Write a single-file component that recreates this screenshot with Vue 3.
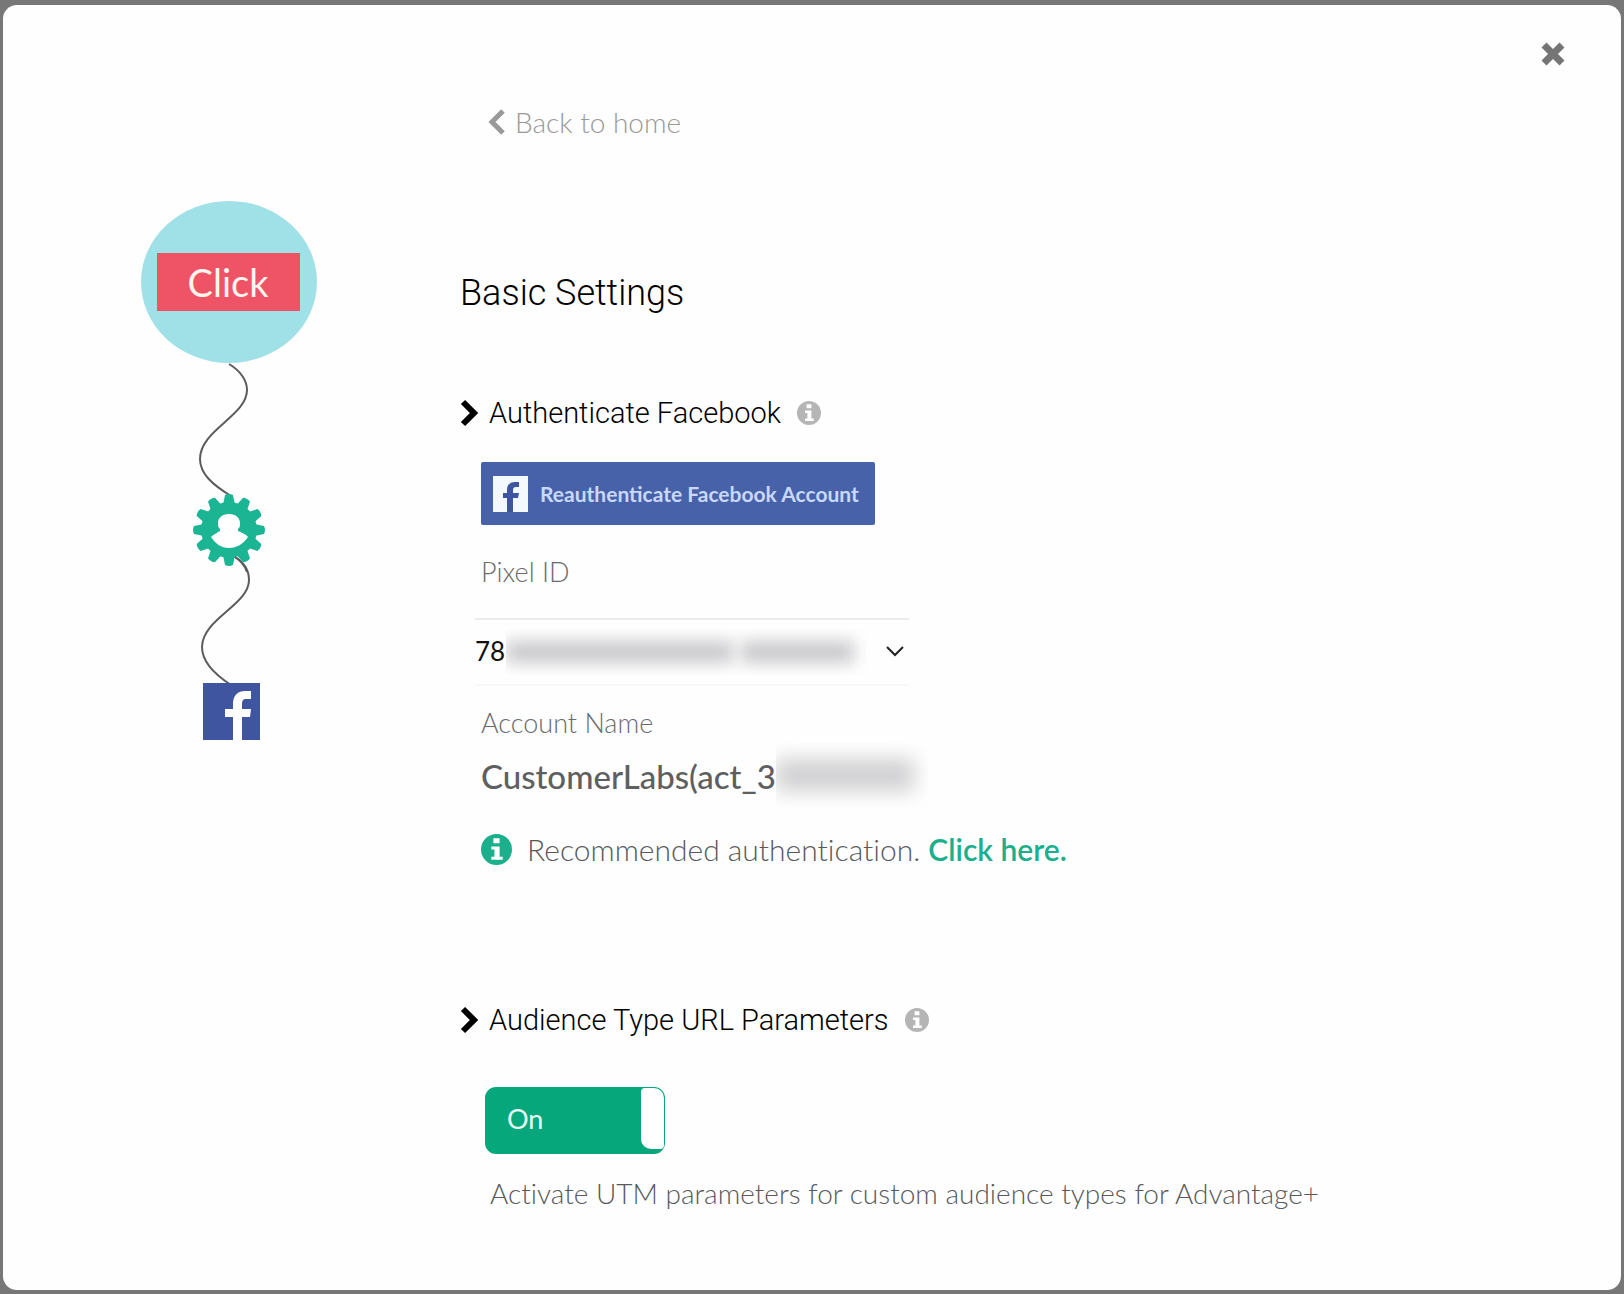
<script setup>
import { ref } from 'vue'

const pixel = ref('78')
const urlParameters = ref(true)
const teeth = Array.from({ length: 12 }, (_, i) => i * 30)
</script>

<template>
  <div class="page">
    <section class="dialog" role="dialog" aria-labelledby="settings-title">
      <button class="close" type="button" aria-label="Close">
        <svg width="24" height="24" viewBox="0 0 24 24">
          <path d="M3 3 21 21M21 3 3 21" stroke="#757575" stroke-width="7" />
        </svg>
      </button>

      <aside class="flow">
        <svg class="flow-art" width="180" height="544" viewBox="0 0 180 544" role="img" aria-label="Click to Facebook flow">
          <ellipse cx="90" cy="83" rx="88" ry="81" fill="#a0e1e7" />
          <rect x="18" y="54" width="143" height="58" fill="#ef5466" />
          <text x="89" y="98" text-anchor="middle" class="flow-text">Click</text>
          <g fill="none" stroke="#5c5c5e" stroke-width="2">
            <path d="M90 165C102 172 108 182 108 191C108 217 61 231 61 260C61 275 74 286 92 297" />
            <path d="M96 358C106 364 110 373 110 381C110 406 63 420 63 448C63 463 75 475 92 486" />
          </g>
          <g transform="translate(90 331)">
            <g fill="#1bb593">
              <circle r="28" />
              <path v-for="angle in teeth" :key="angle" d="M-6-25-4-35Q0-37 4-35L6-25Z" :transform="`rotate(${angle})`" />
            </g>
            <path fill="#fff" d="M0-16C7-16 11-12 11-7C11-4 11-3 9-1L9 1C13 3 17 4 19 7C14 14 8 18 0 18C-8 18-13 14-18 7C-15 4-12 3-9 1L-9-1C-11-3-11-4-11-7C-11-12-7-16 0-16Z" />
          </g>
          <path d="M96 358C102 362 106 367 108 373" fill="none" stroke="#5c5c5e" stroke-width="2" />
          <rect x="64" y="484" width="57" height="57" fill="#3f559f" />
          <path fill="#fff" d="M94 541V518H86V510H94V505C94 496 99 492 106 492H112V500H107C104 500 103 502 103 505V510H112L111 518H103V541Z" />
        </svg>
      </aside>

      <main class="content">
        <a class="back" href="#home">
          <svg width="17" height="26" viewBox="0 0 17 26"><path d="M15 2 4 13 15 24" fill="none" stroke="#999" stroke-width="5" /></svg>
          Back to home
        </a>

        <h1 id="settings-title">Basic Settings</h1>

        <section>
          <h2>
            <svg class="chevron" width="19" height="28" viewBox="0 0 19 28"><path d="M3 3 14 14 3 25" fill="none" stroke="#000" stroke-width="6" /></svg>
            Authenticate Facebook
            <svg class="info" width="24" height="24" viewBox="0 0 30 30"><circle cx="15" cy="15" r="15" fill="#b5b5b5" /><path fill="#fff" d="M12 4H18V9H12ZM10 12H18V22H21V25H10V22H13V15H10Z" /></svg>
          </h2>

          <div class="fields">
            <button class="facebook" type="button">
              <svg width="35" height="36" viewBox="0 0 35 36"><path fill="#f4f8ff" d="M0 0H35V36H0Z" /><path fill="#3f559f" d="M14 36V22H10V17H14V14C14 8 18 6 22 6H26V11H23C21 11 20 12 20 14V17H26L25 22H20V36Z" /></svg>
              <span>Reauthenticate Facebook Account</span>
            </button>

            <label class="caption" for="pixel-id">Pixel ID</label>
            <div class="select">
              <select id="pixel-id" v-model="pixel">
                <option value="78">78</option>
              </select>
              <svg class="arrow" width="18" height="12" viewBox="0 0 18 12"><path d="M1 2 9 10 17 2" fill="none" stroke="#222" stroke-width="2" /></svg>
              <span class="masks"><i class="mask mask-long"></i><i class="mask mask-short"></i></span>
            </div>

            <div class="caption account-caption">Account Name</div>
            <div class="account">CustomerLabs(act_3<span class="account-mask"><i class="mask"></i></span></div>

            <p class="advice">
              <svg width="31" height="31" viewBox="0 0 30 30"><circle cx="15" cy="15" r="15" fill="#1baf8b" /><path fill="#fff" d="M12 4H18V9H12ZM10 12H18V22H21V25H10V22H13V15H10Z" /></svg>
              <span>Recommended authentication. <a href="#authentication">Click here.</a></span>
            </p>
          </div>
        </section>

        <section class="audience">
          <h2>
            <svg class="chevron" width="19" height="28" viewBox="0 0 19 28"><path d="M3 3 14 14 3 25" fill="none" stroke="#000" stroke-width="6" /></svg>
            Audience Type URL Parameters
            <svg class="info" width="24" height="24" viewBox="0 0 30 30"><circle cx="15" cy="15" r="15" fill="#b5b5b5" /><path fill="#fff" d="M12 4H18V9H12ZM10 12H18V22H21V25H10V22H13V15H10Z" /></svg>
          </h2>
          <label class="switch" :class="{ off: !urlParameters }">
            <input v-model="urlParameters" type="checkbox" aria-describedby="utm-note" />
            <span class="state">{{ urlParameters ? 'On' : 'Off' }}</span>
            <span class="knob"></span>
          </label>
          <p id="utm-note" class="note">Activate UTM parameters for custom audience types for Advantage+</p>
        </section>
      </main>
    </section>
  </div>
</template>

<style>
body {
  background: #777;
}
</style>

<style scoped>
* {
  box-sizing: border-box;
}

.page {
  min-height: 100vh;
  padding: 5px 3px 4px;
  display: flex;
  background: #777;
  font-family: Lato, sans-serif;
  font-weight: 300;
  font-variant-ligatures: none;
  color: #58595b;
}

.dialog {
  position: relative;
  flex: 1;
  display: flex;
  padding: 99px 40px 40px 136px;
  border-radius: 14px;
  background: #fefefe;
}

.close {
  position: absolute;
  top: 37px;
  right: 56px;
  padding: 0;
  border: 0;
  background: none;
}

svg {
  display: block;
  flex: none;
}

.flow {
  flex: none;
  width: 321px;
  padding-top: 95px;
}

.flow-text {
  font-family: Lato, sans-serif;
  font-size: 38px;
  font-weight: 400;
  fill: #fff4ee;
}

.content {
  flex: 1;
  min-width: 0;
}

.back {
  display: inline-flex;
  align-items: center;
  gap: 10px;
  margin-left: 28px;
  font-size: 28px;
  line-height: 36px;
  color: #999;
  text-decoration: none;
}

h1,
h2 {
  margin: 0;
  font-family: Roboto, sans-serif;
  color: #000;
}

h1 {
  margin: 131px 0 78px;
  font-size: 36px;
  line-height: 44px;
  font-weight: 300;
}

h2 {
  display: flex;
  align-items: center;
  font-size: 29px;
  line-height: 40px;
  font-weight: 300;
}

.chevron {
  margin-right: 10px;
}

.info {
  margin-left: 16px;
}

.fields {
  display: flex;
  flex-direction: column;
  align-items: flex-start;
  padding: 29px 0 0 21px;
}

.facebook {
  display: flex;
  align-items: center;
  gap: 12px;
  height: 63px;
  padding: 0 16px 0 12px;
  border: 0;
  border-radius: 2px;
  background: #4862aa;
  color: #c8d9fb;
  font-family: Lato, sans-serif;
  font-size: 21px;
  font-weight: 700;
  font-variant-ligatures: normal;
  white-space: nowrap;
}

.caption {
  margin-top: 29px;
  font-size: 27px;
  line-height: 36px;
  color: #6a6b6d;
}

.select {
  position: relative;
  width: 434px;
  margin: 28px 0 0 -6px;
  border-top: 2px solid #ebebeb;
  border-bottom: 2px solid #f8f8f8;
}

select {
  display: block;
  width: 100%;
  height: 64px;
  padding: 0 0 2px;
  border: 0;
  appearance: none;
  background: none;
  color: #111;
  font-family: Lato, sans-serif;
  font-size: 26px;
  font-weight: 400;
}

.arrow {
  position: absolute;
  top: 25px;
  right: 5px;
}

.masks {
  position: absolute;
  top: 9px;
  left: 31px;
  display: flex;
  gap: 8px;
  width: 360px;
  height: 46px;
  padding: 12px;
  padding-left: 0;
  overflow: hidden;
  pointer-events: none;
}

.mask {
  flex: 1;
  background: #c9c8cb;
  filter: blur(8px);
}

.mask-long {
  flex: 2;
}

.account-caption {
  margin-top: 19px;
}

.account {
  display: flex;
  margin-top: 13px;
  font-size: 33px;
  line-height: 44px;
  font-weight: 500;
  color: #5e5f61;
}

.account-mask {
  display: flex;
  width: 152px;
  height: 64px;
  margin: -11px 0 -9px;
  padding: 16px 14px 16px 0;
  overflow: hidden;
}

.account-mask .mask {
  background: #d0cfd1;
  filter: blur(10px);
}

.advice {
  display: flex;
  align-items: center;
  gap: 15px;
  margin: 31px 0 0;
  font-size: 30px;
  line-height: 40px;
}

.advice a {
  color: #1baf8b;
  font-weight: 600;
  text-decoration: none;
}

.audience {
  margin-top: 131px;
}

.switch {
  position: relative;
  display: flex;
  justify-content: space-between;
  width: 180px;
  height: 67px;
  margin: 47px 0 0 25px;
  padding: 1px 1px 5px 22px;
  border-radius: 11px;
  background: #07a77c;
  color: #e9fff9;
  cursor: pointer;
}

.switch.off {
  background: #999;
}

.switch input {
  position: absolute;
  inset: 0;
  width: 100%;
  height: 100%;
  margin: 0;
  opacity: 0;
}

.state {
  font-size: 27px;
  line-height: 62px;
  font-weight: 400;
}

.knob {
  width: 23px;
  border-radius: 4px 10px 4px 10px;
  background: #fff;
}

.note {
  margin: 21px 0 0 30px;
  font-size: 28px;
  line-height: 36px;
}
</style>
